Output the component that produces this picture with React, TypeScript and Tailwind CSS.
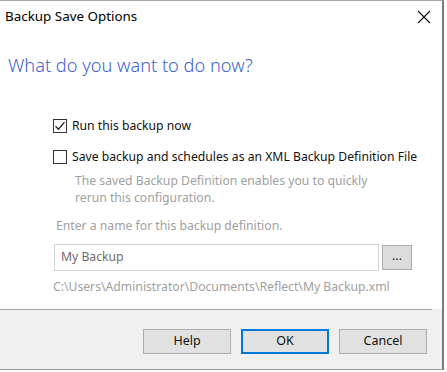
import React from "react";

const font = { fontFamily: '"Noto Sans", "Open Sans", sans-serif' };

function Checkbox({ checked }: { checked: boolean }) {
  return (
    <div className="w-[14px] h-[14px] border border-[#333333] bg-white flex items-center justify-center shrink-0">
      {checked && (
        <svg width="12" height="12" viewBox="0 0 12 12">
          <path d="M1.5 6.2 L4.5 9.2 L10.5 2.2" fill="none" stroke="#222" strokeWidth="1.3" />
        </svg>
      )}
    </div>
  );
}

function Btn({ label, primary }: { label: string; primary?: boolean }) {
  return (
    <div
      className={
        "w-[88px] h-[25px] bg-[#e1e1e1] flex items-center justify-center text-[12.5px] text-[#111] " +
        (primary ? "border-2 border-[#0078d7]" : "border border-[#adadad]")
      }
    >
      {label}
    </div>
  );
}

export default function App() {
  return (
    <div className="w-[447px] h-[372px] bg-white" style={font}>
      <div className="w-[444px] h-[370px] border-t border-b border-r-2 border-t-[#a8a8a8] border-b-[#9a9a9a] border-r-[#7a7a7a] flex flex-col">
        <div className="h-[31px] flex items-center justify-between pl-[5px] pr-[11px] shrink-0">
          <span className="text-[13.4px] text-black">Backup Save Options</span>
          <svg width="14" height="14" viewBox="0 0 14 14">
            <path d="M1 1 L13 13 M13 1 L1 13" stroke="#111" strokeWidth="1.1" />
          </svg>
        </div>
        <div className="flex-1 flex flex-col bg-white">
          <div className="mt-[19px] pl-[8px] text-[18.2px] leading-[28px] text-[#3f63cc] font-light">
            What do you want to do now?
          </div>
          <div className="mt-[39px] pl-[53px] flex items-center h-[16px] text-[12.2px] text-[#111]">
            <Checkbox checked />
            <span className="ml-[5px]">Run this backup now</span>
          </div>
          <div className="mt-[15px] pl-[53px] flex items-center h-[16px] text-[12.2px] text-[#111]">
            <Checkbox checked={false} />
            <span className="ml-[5px]">Save backup and schedules as an XML Backup Definition File</span>
          </div>
          <div className="mt-[7px] pl-[75px] text-[12.2px] leading-[17px] text-[#a0a0a0]">
            The saved Backup Definition enables you to quickly
            <br />
            rerun this configuration.
          </div>
          <div className="mt-[11px] pl-[56px] text-[12.2px] leading-[17px] text-[#a0a0a0]">
            Enter a name for this backup definition.
          </div>
          <div className="mt-[10px] pl-[54px] flex items-center gap-[3px]">
            <div className="w-[325px] h-[27px] border border-[#d5d5d5] bg-white flex items-center pl-[6px] text-[12.2px] text-[#6d6d6d]">
              My Backup
            </div>
            <div className="w-[30px] h-[25px] border border-[#adadad] bg-[#dcdcdc] flex items-center justify-center text-[12.2px] text-[#222] leading-none pb-[2px]">
              ...
            </div>
          </div>
          <div className="mt-[7px] pl-[53px] text-[12.2px] leading-[17px] text-[#a0a0a0]">
            C:\Users\Administrator\Documents\Reflect\My Backup.xml
          </div>
        </div>
        <div className="h-[60px] shrink-0 bg-[#f0f0f0] flex flex-col">
          <div className="h-px bg-[#a8a8a8] mr-[10px]" />
          <div className="flex justify-end gap-[10px] pr-[15px] pt-[19px]">
            <Btn label="Help" />
            <Btn label="OK" primary />
            <Btn label="Cancel" />
          </div>
        </div>
      </div>
    </div>
  );
}
